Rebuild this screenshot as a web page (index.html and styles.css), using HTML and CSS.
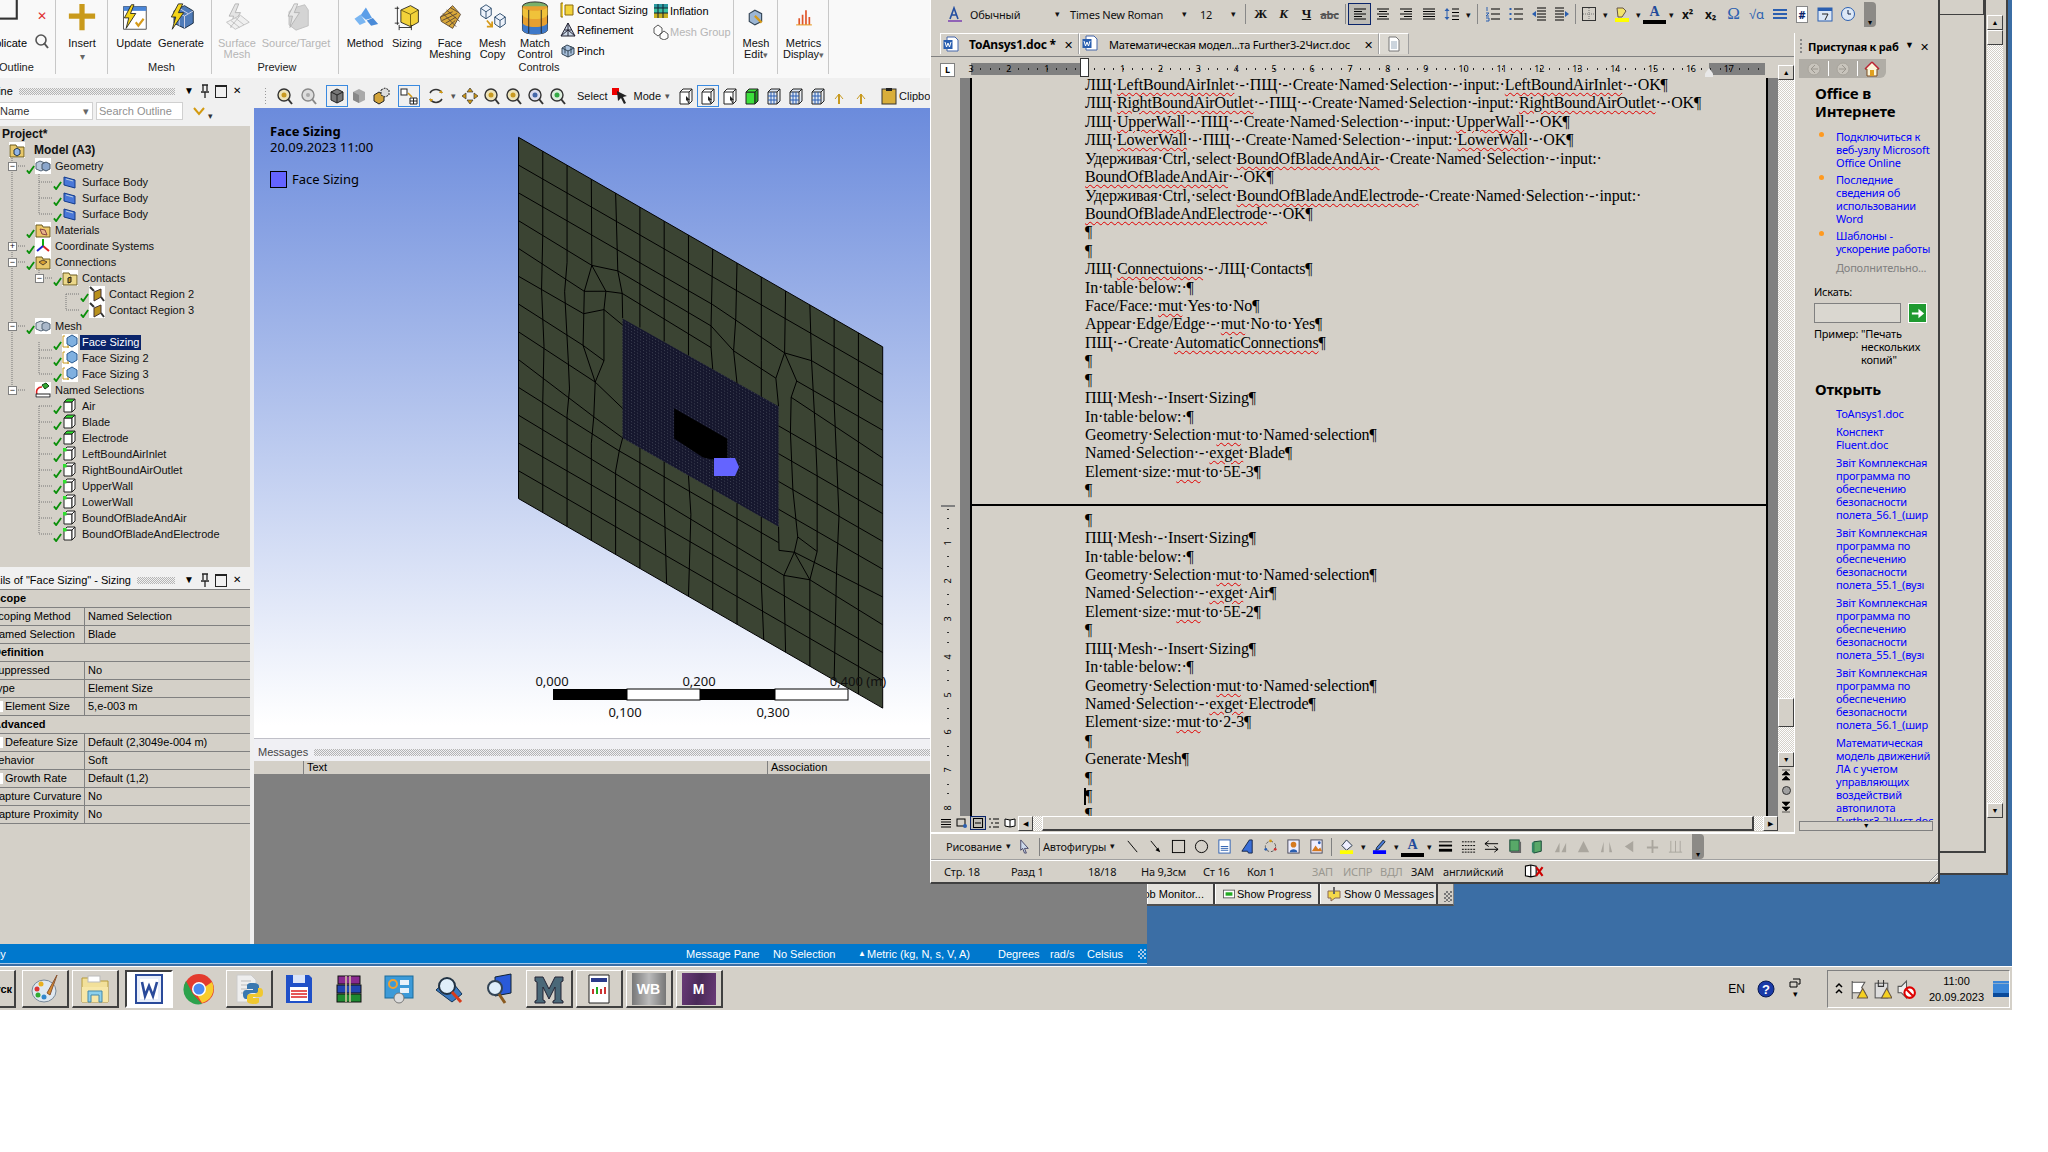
FILE: index.html
```html
<!DOCTYPE html>
<html lang="ru">
<head>
    <meta charset="UTF-8">
    <title>Ansys Mechanical and Word</title>
    <link rel="stylesheet" href="styles.css">
</head>
<body>
<svg class="defs" width="0" height="0">
    <defs>
        <symbol id="check" viewBox="0 0 10 10"><path d="M1 6l2.5 3L9 1" fill="none" stroke="#0a8f0a" stroke-width="2"/></symbol>
        <symbol id="t-model" viewBox="0 0 16 16"><rect width="16" height="16" fill="#fff"/><path d="M1 3h6l1 2h7v10H1z" fill="#e8c86a" stroke="#6a5a20"/><path d="M5 8l3-2 3 2v4l-3 2-3-2z" fill="#8fb4e8" stroke="#234"/></symbol>
        <symbol id="t-geom" viewBox="0 0 16 16"><rect width="16" height="16" fill="#fff"/><path d="M1 5l4-2 5 2v6l-4 2-5-2z" fill="#b8c8dc" stroke="#567"/><path d="M7 6l4-2 4 2v5l-4 2-4-2z" fill="#8aa6cc" stroke="#456"/></symbol>
        <symbol id="t-body" viewBox="0 0 16 16"><path d="M2 3l11 3v8L2 11z" fill="#4a78d8" stroke="#123a8a"/><path d="M4 5l7 2" stroke="#bcd"/></symbol>
        <symbol id="t-mat" viewBox="0 0 16 16"><rect width="16" height="16" fill="#fff"/><path d="M1 3h6l1 2h7v10H1z" fill="#ecc868" stroke="#6a5a20"/><path d="M5 7l5 1 2 5-5-1z" fill="#e8b48a" stroke="#844"/></symbol>
        <symbol id="t-coord" viewBox="0 0 16 16"><rect width="16" height="16" fill="#fff"/><path d="M8 8V1" stroke="#1a1" stroke-width="2"/><path d="M8 8l6 5" stroke="#d22" stroke-width="2"/><path d="M8 8l-6 5" stroke="#22c" stroke-width="2"/></symbol>
        <symbol id="t-conn" viewBox="0 0 16 16"><rect width="16" height="16" fill="#fff"/><path d="M1 3h6l1 2h7v10H1z" fill="#e8c86a" stroke="#6a5a20"/><path d="M4 8l4-2 4 2-4 3z" fill="#d6a030" stroke="#543"/></symbol>
        <symbol id="t-cont" viewBox="0 0 16 16"><rect width="16" height="16" fill="#fff"/><path d="M1 3h6l1 2h7v10H1z" fill="#ecd88a" stroke="#6a5a20"/><path d="M6 8l3-1v5l-3 1z" fill="#b88a18" stroke="#222"/></symbol>
        <symbol id="t-region" viewBox="0 0 16 16"><rect width="16" height="16" fill="#fff"/><path d="M1 1l4 4M12 11l3 4" stroke="#333" stroke-width="2"/><path d="M5 6l7-3v8l-7 4z" fill="#b8901c" stroke="#433"/></symbol>
        <symbol id="t-mesh" viewBox="0 0 16 16"><rect width="16" height="16" fill="#fff"/><path d="M1 5l5-2 5 2v6l-5 2-5-2z" fill="#ccd4de" stroke="#567"/><path d="M7 6l4-2 4 2v5l-4 2-4-2z" fill="#aab8ca" stroke="#567"/></symbol>
        <symbol id="t-size" viewBox="0 0 16 16"><rect width="16" height="16" fill="#fff"/><path d="M1 2v11h6M1 2h2M6 11v3" fill="none" stroke="#c89a20"/><path d="M5 4l5-3 5 3v6l-5 3-5-3z" fill="#7fb0e0" stroke="#2a5a90"/></symbol>
        <symbol id="t-named" viewBox="0 0 16 16"><rect width="16" height="16" fill="#fff"/><path d="M2 12a5 5 0 0 1 5-7" fill="none" stroke="#d22" stroke-width="1.6"/><path d="M7 3l4-2 3 3-4 3z" fill="#3a3" stroke="#141"/><rect x="1" y="12" width="14" height="3" fill="#fff" stroke="#222"/></symbol>
        <symbol id="t-face" viewBox="0 0 16 16"><path d="M2 4h8v10H2z" fill="#fff" stroke="#222"/><path d="M2 4l3-3h8l-3 3z" fill="#2ee02e" stroke="#222"/><path d="M10 4l3-3v10l-3 3z" fill="#fff" stroke="#222"/></symbol>
        <symbol id="t-edge" viewBox="0 0 16 16"><path d="M2 4h8v10H2z" fill="#fff" stroke="#222"/><path d="M2 4l3-3h8l-3 3z" fill="#fff" stroke="#222"/><path d="M10 4l3-3v10l-3 3z" fill="#fff" stroke="#222"/><rect x="1" y="2" width="3.5" height="3.5" fill="#2ee02e"/></symbol>

        <symbol id="b-zoom" viewBox="0 0 18 18"><circle cx="8" cy="8" r="6" fill="#ede3b8" stroke="#333" stroke-width="1.4"/><path d="M12 12l4 5" stroke="#333" stroke-width="2"/><circle cx="8" cy="8" r="2.5" fill="#c89a20"/></symbol>
        <symbol id="b-zoomg" viewBox="0 0 18 18"><circle cx="8" cy="8" r="6" fill="#ddd" stroke="#888" stroke-width="1.4"/><path d="M12 12l4 5" stroke="#888" stroke-width="2"/><circle cx="8" cy="8" r="2" fill="#aaa"/></symbol>
        <symbol id="b-zoomb" viewBox="0 0 18 18"><circle cx="8" cy="8" r="6" fill="#dde" stroke="#333" stroke-width="1.4"/><path d="M12 12l4 5" stroke="#333" stroke-width="2"/><circle cx="8" cy="8" r="2.5" fill="#46a"/></symbol>
        <symbol id="b-zoomv" viewBox="0 0 18 18"><circle cx="8" cy="8" r="6" fill="#ded" stroke="#333" stroke-width="1.4"/><path d="M12 12l4 5" stroke="#333" stroke-width="2"/><circle cx="8" cy="8" r="2.5" fill="#3a4"/></symbol>
        <symbol id="b-cube" viewBox="0 0 18 18"><path d="M3 5l6-3 6 3v8l-6 3-6-3z" fill="#777" stroke="#222"/><path d="M3 5l6 3 6-3M9 8v8" fill="none" stroke="#222"/></symbol>
        <symbol id="b-cubeg" viewBox="0 0 18 18"><path d="M3 5l6-3 6 3v8l-6 3-6-3z" fill="#aaa"/><path d="M3 5l6 3v8l-6-3z" fill="#888"/></symbol>
        <symbol id="b-multi" viewBox="0 0 18 18"><path d="M2 8l5-3 5 3v6l-5 3-5-3z" fill="#d2a33a" stroke="#222"/><path d="M9 3l4-2 4 2v5l-4 2-4-2z" fill="#ddd" stroke="#222" stroke-dasharray="2 1"/></symbol>
        <symbol id="b-split" viewBox="0 0 18 18"><rect x="1" y="2" width="6" height="6" fill="#fff" stroke="#222"/><path d="M10 11h7v6h-7zM13.500 11v6M10 14h7" fill="#fff" stroke="#222"/><path d="M8 6l4 4" stroke="#d39a10" stroke-width="1.6"/></symbol>
        <symbol id="b-rot" viewBox="0 0 18 18"><path d="M3 6a7 7 0 0 1 12 0M15 12a7 7 0 0 1-12 0" fill="none" stroke="#333" stroke-width="1.5"/><path d="M14 3l2 3-4 0zM4 15l-2-3 4 0z" fill="#d39a10"/></symbol>
        <symbol id="b-pan" viewBox="0 0 18 18"><path d="M9 1l3 4H6zM9 17l-3-4h6zM1 9l4-3v6zM17 9l-4 3V6z" fill="#d39a10" stroke="#333" stroke-width=".7"/></symbol>
        <symbol id="b-vert" viewBox="0 0 18 18"><path d="M3 5h9v12H3zM3 5l3-3h9l-3 3M15 2v12l-3 3" fill="#fff" stroke="#222"/><path d="M9 9l4 4-2 0 1 3-1 0-1-3-1 1z" fill="#222"/></symbol>
        <symbol id="b-vface" viewBox="0 0 18 18"><path d="M3 5h9v12H3z" fill="#3de03d" stroke="#222"/><path d="M3 5l3-3h9l-3 3z" fill="#3de03d" stroke="#222"/><path d="M15 2v12l-3 3V5z" fill="#1fa01f" stroke="#222"/></symbol>
        <symbol id="b-vmesh" viewBox="0 0 18 18"><path d="M3 5h9v12H3zM3 5l3-3h9l-3 3M15 2v12l-3 3" fill="#dde6f2" stroke="#222"/><path d="M6 5v12M9 5v12M3 9h9M3 13h9" stroke="#2a5fb4"/></symbol>
        <symbol id="b-clip" viewBox="0 0 18 18"><rect x="2" y="2" width="14" height="15" fill="#d9ae3a" stroke="#333"/><rect x="6" y="1" width="6" height="3" fill="#222"/></symbol>
        <symbol id="b-xyz" viewBox="0 0 18 18"><path d="M8 7v10" stroke="#c89a20" stroke-width="2"/><path d="M4 12l4-5 4 5" fill="none" stroke="#c89a20"/></symbol>
        <symbol id="b-pin" viewBox="0 0 12 14"><path d="M3 1h6M4 1v6M8 1v6M2 8h8M6 8v6" fill="none" stroke="#222" stroke-width="1.300"/></symbol>

        <symbol id="w-left" viewBox="0 0 16 16"><path d="M2 3h12M2 5.500h8M2 8h12M2 10.500h8M2 13h12" stroke="#000"/></symbol>
        <symbol id="w-center" viewBox="0 0 16 16"><path d="M2 3h12M4 5.500h8M2 8h12M4 10.500h8M2 13h12" stroke="#000"/></symbol>
        <symbol id="w-right" viewBox="0 0 16 16"><path d="M2 3h12M6 5.500h8M2 8h12M6 10.500h8M2 13h12" stroke="#000"/></symbol>
        <symbol id="w-just" viewBox="0 0 16 16"><path d="M2 3h12M2 5.500h12M2 8h12M2 10.500h12M2 13h12" stroke="#000"/></symbol>
        <symbol id="w-spacing" viewBox="0 0 16 16"><path d="M3 2l2.500 3h-5zM3 14l2.500-3h-5z" fill="#2b5fb0"/><path d="M3 4v8" stroke="#2b5fb0"/><path d="M8 3h7M8 6.500h7M8 10h7M8 13.500h7" stroke="#000"/></symbol>
        <symbol id="w-num" viewBox="0 0 16 16"><path d="M6 3h9M6 8h9M6 13h9" stroke="#000"/><path d="M2 1v4M1 7h3l-3 3h3M1 12h3v3H1" fill="none" stroke="#2b5fb0"/></symbol>
        <symbol id="w-bul" viewBox="0 0 16 16"><path d="M6 3h9M6 8h9M6 13h9" stroke="#000"/><path d="M1.500 2h2v2h-2zM1.500 7h2v2h-2zM1.500 12h2v2h-2z" fill="#2b5fb0"/></symbol>
        <symbol id="w-out" viewBox="0 0 16 16"><path d="M6 2h9M6 5h9M6 8h9M6 11h9M6 14h9" stroke="#000"/><path d="M1 8l4-3v6z" fill="#2b5fb0"/></symbol>
        <symbol id="w-ind" viewBox="0 0 16 16"><path d="M1 2h9M1 5h9M1 8h9M1 11h9M1 14h9" stroke="#000"/><path d="M15 8l-4-3v6z" fill="#2b5fb0"/></symbol>
        <symbol id="w-border" viewBox="0 0 16 16"><rect x="1.500" y="1.500" width="13" height="13" fill="none" stroke="#333"/><path d="M8 2v12M2 8h12" stroke="#777" stroke-dasharray="1 1"/></symbol>
        <symbol id="w-doc" viewBox="0 0 16 16"><path d="M3 1h7l3 3v11H3z" fill="#fff" stroke="#777"/><path d="M5 6h6M5 8h6M5 10h6M5 12h6" stroke="#9ab"/></symbol>
        <symbol id="w-word" viewBox="0 0 16 16"><path d="M4 1h8l3 3v11H4z" fill="#fff" stroke="#46a"/><rect x="0.500" y="4" width="9" height="9" fill="#2a5fb0"/><path d="M2 6l1.500 5 1.500-4 1.500 4L8 6" fill="none" stroke="#fff"/></symbol>
        <symbol id="w-a3" viewBox="0 0 16 16"><path d="M3 13L7 2l4 11M5 9h4" fill="none" stroke="#234ea0" stroke-width="1.6"/><path d="M1 15h14" stroke="#7a3fb0" stroke-width="1.5"/></symbol>
    </defs>
</svg>

<div class="screen">
    <div class="desktop">

        <!-- windows behind Word -->
        <div class="backwin far">
            <div class="far-scroll">
                <span class="sb-btn">▲</span><span class="sb-btn"></span>
                <span class="sb-fill"></span>
                <span class="sb-btn">▼</span>
            </div>
        </div>
        <div class="backwin near"><div class="near-top"></div></div>

        <!-- Mechanical -->
        <div class="mech">
            <div class="ribbon">
                <div class="rgroup g-outline">
                    <div class="rrow">
                        <div class="dup">
                            <svg class="dup-ic" viewBox="0 0 20 26"><rect x="-6" y="-2" width="24" height="24" fill="none" stroke="#333" stroke-width="2.5"/></svg>
                            <span class="dup-label">Duplicate</span>
                        </div>
                        <div class="dup-side">
                            <span class="red-x">✕</span>
                            <svg class="i16" viewBox="0 0 16 16"><circle cx="7" cy="7" r="5" fill="none" stroke="#555" stroke-width="1.6"/><path d="M10 10l4 5" stroke="#555" stroke-width="2"/></svg>
                        </div>
                    </div>
                    <div class="rlabel out-label">Outline</div>
                </div>
                <div class="rgroup g-insert">
                    <div class="rrow">
                        <div class="rbtn w52">
                            <svg class="ri" viewBox="0 0 32 32"><path d="M13 1h6v11h12v6H19v13h-6V18H1v-6h12z" fill="#c99a1c"/></svg>
                            <span>Insert</span><i class="drop">▾</i>
                        </div>
                    </div>
                </div>
                <div class="rgroup g-mesh">
                    <div class="rrow">
                        <div class="rbtn w44">
                            <svg class="ri" viewBox="0 0 32 32"><path d="M4 4h26v26H4z" fill="#fff" stroke="#444"/><path d="M4 4h26v5H4z" fill="#4a86d8"/><path d="M13 2L5 17h5l-3 12 11-17h-6l4-10z" fill="#f3d41a" stroke="#222"/><path d="M18 22l3 4 6-8" fill="none" stroke="#d69a1a" stroke-width="2.4"/></svg>
                            <span>Update</span>
                        </div>
                        <div class="rbtn w50">
                            <svg class="ri" viewBox="0 0 32 32"><path d="M8 9l12-6 10 6v14l-10 6-12-6z" fill="#4f7bb8" stroke="#123"/><path d="M8 9l12 6 10-6M20 15v14M14 6l10 6M14 12v14" fill="none" stroke="#dde"/><path d="M13 1L5 16h5L6 30l13-19h-6l5-10z" fill="#f3d41a" stroke="#222"/></svg>
                            <span>Generate</span>
                        </div>
                    </div>
                    <div class="rlabel">Mesh</div>
                </div>
                <div class="rgroup g-preview">
                    <div class="rrow">
                        <div class="rbtn w42 off">
                            <svg class="ri" viewBox="0 0 32 32"><path d="M14 1L7 15h5L9 28l11-17h-6l4-10z" fill="#ddd" stroke="#999"/><path d="M4 22l16-8 10 8-16 8z" fill="#eee" stroke="#aaa"/><path d="M9 20l10 8M14 17l10 8M19 15l-10 12" stroke="#aaa"/></svg>
                            <span>Surface<br>Mesh</span>
                        </div>
                        <div class="rbtn w76 off">
                            <svg class="ri" viewBox="0 0 32 32"><path d="M12 6l14-4 4 6v18l-14 5-8-6V10z" fill="#c8c8c8" stroke="#aaa"/><path d="M14 1L7 15h5L9 28l11-17h-6l4-10z" fill="#e2e2e2" stroke="#999"/></svg>
                            <span>Source/Target</span>
                        </div>
                    </div>
                    <div class="rlabel">Preview</div>
                </div>
                <div class="rgroup g-controls">
                    <div class="rrow">
                        <div class="rbtn w40">
                            <svg class="ri" viewBox="0 0 32 32"><path d="M17 5l7 12-7 2-6-5z" fill="#5b9ee8"/><path d="M4 18l7-5 6 9-7 3z" fill="#7ab6f2"/><path d="M18 20l7-3 6 7-8 2z" fill="#4a8bd8"/></svg>
                            <span>Method</span>
                        </div>
                        <div class="rbtn w44">
                            <svg class="ri" viewBox="0 0 32 32"><path d="M9 8l11-5 9 5v14l-9 5-11-5z" fill="#f2d23a" stroke="#222"/><path d="M9 8l11 5 9-5M20 13v14" fill="none" stroke="#6a5a10"/><path d="M5 4v21M2 6h5M2 23h5M7 28h14M7 25v6M21 25v6" fill="none" stroke="#222"/></svg>
                            <span>Sizing</span>
                        </div>
                        <div class="rbtn w42">
                            <svg class="ri" viewBox="0 0 32 32"><path d="M5 16L19 3l9 10-9 16-13-8z" fill="#d9a83a" stroke="#543"/><path d="M8 12l15 15M12 8l15 13M16 5l10 6M5 16l14-6M7 20l17-8M11 23l12-7M15 26l7-6" stroke="#543"/></svg>
                            <span>Face<br>Meshing</span>
                        </div>
                        <div class="rbtn w43">
                            <svg class="ri" viewBox="0 0 32 32"><path d="M2 6l6-4 6 4v8l-6 4-6-4z" fill="#eef3fb" stroke="#246"/><path d="M2 6l6 4 6-4M8 10v8" fill="none" stroke="#246"/><path d="M18 16l6-4 6 4v8l-6 4-6-4z" fill="#eef3fb" stroke="#246"/><path d="M18 16l6 4 6-4M24 20v8" fill="none" stroke="#246"/><path d="M9 20l6 7M15 21v6H9" fill="none" stroke="#d69a1a" stroke-width="2"/></svg>
                            <span>Mesh<br>Copy</span>
                        </div>
                        <div class="rbtn w42">
                            <svg class="ri big" viewBox="0 0 34 38"><ellipse cx="17" cy="6" rx="14" ry="5" fill="#7ab06a" stroke="#222"/><path d="M3 6v26c0 3 6 5 14 5s14-2 14-5V6" fill="#e8a030" stroke="#222"/><path d="M3 6c0 3 6 5 14 5s14-2 14-5v9c0 3-6 5-14 5S3 18 3 15z" fill="#f0c23a"/><path d="M3 24c0 3 6 5 14 5s14-2 14-5v8c0 3-6 5-14 5S3 35 3 32z" fill="#3d78c8"/><path d="M10 10v26M24 10v26" stroke="#222"/></svg>
                            <span>Match<br>Control</span>
                        </div>
                        <div class="rsmall c1">
                            <div class="sitem"><svg class="i16" viewBox="0 0 16 16"><path d="M3 1H1v14h2M5 3h8v10H5z" fill="#f2d23a" stroke="#8a6a10"/></svg><span>Contact Sizing</span></div>
                            <div class="sitem"><svg class="i16" viewBox="0 0 16 16"><path d="M8 1l7 13H1z" fill="#cdd9e8" stroke="#223"/><path d="M8 1v13M4.500 8h7M1 14l7-6 7 6" fill="none" stroke="#223"/></svg><span>Refinement</span></div>
                            <div class="sitem"><svg class="i16" viewBox="0 0 16 16"><path d="M2 5l5-3 7 3v6l-6 3-6-3z" fill="#a8c0dc" stroke="#345"/><path d="M2 5l6 3 6-3M8 8v6M5 3.500v7M11 3.500v7" fill="none" stroke="#345"/></svg><span>Pinch</span></div>
                        </div>
                        <div class="rsmall c2">
                            <div class="sitem"><svg class="i16" viewBox="0 0 16 16"><rect x="1" y="1" width="14" height="4" fill="#2a9aa0"/><rect x="1" y="5" width="14" height="5" fill="#3ac0a0"/><rect x="1" y="10" width="14" height="5" fill="#c8b020"/><path d="M1 5h14M1 10h14M5 1v14M10 1v14" stroke="#123"/></svg><span>Inflation</span></div>
                            <div class="sitem off"><svg class="i16" viewBox="0 0 16 16"><path d="M1 4l4-3 4 3v5l-4 3-4-3zM7 10l4-3 4 3v4l-4 2-4-2z" fill="#fff" stroke="#222"/></svg><span>Mesh Group</span></div>
                        </div>
                    </div>
                    <div class="rlabel">Controls</div>
                </div>
                <div class="rgroup g-edit">
                    <div class="rrow">
                        <div class="rbtn w44">
                            <svg class="ri small" viewBox="0 0 16 16"><path d="M2 5l5-3 6 3v7l-6 3-5-3z" fill="#9cb6d4" stroke="#345"/><path d="M7 7l6 6" stroke="#d69a1a" stroke-width="2"/></svg>
                            <span>Mesh<br>Edit<i class="drop-in">▾</i></span>
                        </div>
                    </div>
                </div>
                <div class="rgroup g-metric">
                    <div class="rrow">
                        <div class="rbtn w51">
                            <svg class="ri small" viewBox="0 0 16 16"><path d="M3 15V9h1.500v6zM6 15V6h1.500v9zM9 15V2h1.500v13zM12 15V8h1.500v7z" fill="#e0552a"/><path d="M1 15h14" stroke="#e8a030"/></svg>
                            <span>Metrics<br>Display<i class="drop-in">▾</i></span>
                        </div>
                    </div>
                </div>
            </div>

            <div class="mech-main">
                <div class="leftcol">
                    <div class="panel-title">
                        <span class="out-name">Outline</span>
                        <span class="grip"></span>
                        <span class="ptool">▼</span><span class="ptool"><svg class="pin-ic"><use href="#b-pin"/></svg></span><span class="ptool box"></span><span class="ptool">✕</span>
                    </div>
                    <div class="search-row">
                        <div class="sel-name">Name<i>▾</i></div>
                        <div class="sel-search">Search Outline</div>
                        <svg class="chev" viewBox="0 0 14 14"><path d="M2 4l5 6 5-6" fill="none" stroke="#d39a10" stroke-width="2"/></svg>
                        <span class="mini">▾</span>
                    </div>
                    <div class="tree">
                        <svg class="tree-lines" viewBox="0 0 250 441">
                            <path d="M12 32V264M12 40h14M12 120h14M12 136h14M12 200h14M12 264h14M39 48v40M39 56h14M39 72h14M39 88h14M39 216v32M39 224h14M39 232h14M39 248h14M39 152h14M66 168v16M66 168h14M66 184h14M39 280v128M39 280h14M39 296h14M39 312h14M39 328h14M39 344h14M39 360h14M39 376h14M39 392h14M39 408h14M39 136v16" fill="none" stroke="#777" stroke-dasharray="1 1"/>
                        </svg>
                        <div class="node root">Project*</div>
                        <div class="node model"><svg class="ti-ic"><use href="#t-model"/></svg><b>Model (A3)</b></div>
                        <div class="node l1"><i class="exp">−</i><svg class="ck"><use href="#check"/></svg><svg class="ti-ic"><use href="#t-geom"/></svg>Geometry</div>
                        <div class="node l2"><svg class="ck"><use href="#check"/></svg><svg class="ti-ic"><use href="#t-body"/></svg>Surface Body</div>
                        <div class="node l2"><svg class="ck"><use href="#check"/></svg><svg class="ti-ic"><use href="#t-body"/></svg>Surface Body</div>
                        <div class="node l2"><svg class="ck"><use href="#check"/></svg><svg class="ti-ic"><use href="#t-body"/></svg>Surface Body</div>
                        <div class="node l1"><svg class="ck"><use href="#check"/></svg><svg class="ti-ic"><use href="#t-mat"/></svg>Materials</div>
                        <div class="node l1"><i class="exp">+</i><svg class="ck"><use href="#check"/></svg><svg class="ti-ic"><use href="#t-coord"/></svg>Coordinate Systems</div>
                        <div class="node l1"><i class="exp">−</i><svg class="ck"><use href="#check"/></svg><svg class="ti-ic"><use href="#t-conn"/></svg>Connections</div>
                        <div class="node l2"><i class="exp in2">−</i><svg class="ck"><use href="#check"/></svg><svg class="ti-ic"><use href="#t-cont"/></svg>Contacts</div>
                        <div class="node l3"><svg class="ck"><use href="#check"/></svg><svg class="ti-ic"><use href="#t-region"/></svg>Contact Region 2</div>
                        <div class="node l3"><svg class="ck"><use href="#check"/></svg><svg class="ti-ic"><use href="#t-region"/></svg>Contact Region 3</div>
                        <div class="node l1"><i class="exp">−</i><svg class="ck"><use href="#check"/></svg><svg class="ti-ic"><use href="#t-mesh"/></svg>Mesh</div>
                        <div class="node l2"><svg class="ck"><use href="#check"/></svg><svg class="ti-ic"><use href="#t-size"/></svg><span class="sel">Face Sizing</span></div>
                        <div class="node l2"><svg class="ck"><use href="#check"/></svg><svg class="ti-ic"><use href="#t-size"/></svg>Face Sizing 2</div>
                        <div class="node l2"><svg class="ck"><use href="#check"/></svg><svg class="ti-ic"><use href="#t-size"/></svg>Face Sizing 3</div>
                        <div class="node l1"><i class="exp">−</i><span class="ck"></span><svg class="ti-ic"><use href="#t-named"/></svg>Named Selections</div>
                        <div class="node l2"><svg class="ck"><use href="#check"/></svg><svg class="ti-ic"><use href="#t-face"/></svg>Air</div>
                        <div class="node l2"><svg class="ck"><use href="#check"/></svg><svg class="ti-ic"><use href="#t-face"/></svg>Blade</div>
                        <div class="node l2"><svg class="ck"><use href="#check"/></svg><svg class="ti-ic"><use href="#t-face"/></svg>Electrode</div>
                        <div class="node l2"><svg class="ck"><use href="#check"/></svg><svg class="ti-ic"><use href="#t-edge"/></svg>LeftBoundAirInlet</div>
                        <div class="node l2"><svg class="ck"><use href="#check"/></svg><svg class="ti-ic"><use href="#t-edge"/></svg>RightBoundAirOutlet</div>
                        <div class="node l2"><svg class="ck"><use href="#check"/></svg><svg class="ti-ic"><use href="#t-edge"/></svg>UpperWall</div>
                        <div class="node l2"><svg class="ck"><use href="#check"/></svg><svg class="ti-ic"><use href="#t-edge"/></svg>LowerWall</div>
                        <div class="node l2"><svg class="ck"><use href="#check"/></svg><svg class="ti-ic"><use href="#t-edge"/></svg>BoundOfBladeAndAir</div>
                        <div class="node l2"><svg class="ck"><use href="#check"/></svg><svg class="ti-ic"><use href="#t-edge"/></svg>BoundOfBladeAndElectrode</div>
                    </div>
                    <div class="panel-title details-title">
                        <span class="det-name">Details of "Face Sizing" - Sizing</span>
                        <span class="grip"></span>
                        <span class="ptool">▼</span><span class="ptool"><svg class="pin-ic"><use href="#b-pin"/></svg></span><span class="ptool box"></span><span class="ptool">✕</span>
                    </div>
                    <div class="details">
                        <div class="cat">Scope</div>
                        <div class="prop"><span>Scoping Method</span><span>Named Selection</span></div>
                        <div class="prop"><span>Named Selection</span><span>Blade</span></div>
                        <div class="cat">Definition</div>
                        <div class="prop"><span>Suppressed</span><span>No</span></div>
                        <div class="prop"><span>Type</span><span>Element Size</span></div>
                        <div class="prop chk"><span><i></i>Element Size</span><span>5,e-003 m</span></div>
                        <div class="cat">Advanced</div>
                        <div class="prop chk"><span><i></i>Defeature Size</span><span>Default (2,3049e-004 m)</span></div>
                        <div class="prop"><span>Behavior</span><span>Soft</span></div>
                        <div class="prop chk"><span><i></i>Growth Rate</span><span>Default (1,2)</span></div>
                        <div class="prop"><span>Capture Curvature</span><span>No</span></div>
                        <div class="prop"><span>Capture Proximity</span><span>No</span></div>
                    </div>
                </div>

                <div class="rightcol">
                    <div class="gfx-bar">
                        <span class="handle"></span>
                        <span class="gi"><svg><use href="#b-zoom"/></svg></span>
                        <span class="gi gl2"><svg><use href="#b-zoomg"/></svg></span>
                        <span class="gi on gl6"><svg><use href="#b-cube"/></svg></span>
                        <span class="gi"><svg><use href="#b-cubeg"/></svg></span>
                        <span class="gi"><svg><use href="#b-multi"/></svg></span>
                        <span class="gi on gl6"><svg><use href="#b-split"/></svg></span>
                        <span class="gi gl5"><svg><use href="#b-rot"/></svg></span>
                        <span class="gdrop">▾</span>
                        <span class="gi"><svg><use href="#b-pan"/></svg></span>
                        <span class="gi"><svg><use href="#b-zoom"/></svg></span>
                        <span class="gi"><svg><use href="#b-zoom"/></svg></span>
                        <span class="gi"><svg><use href="#b-zoomb"/></svg></span>
                        <span class="gi"><svg><use href="#b-zoomv"/></svg></span>
                        <span class="gtext sel-txt">Select</span>
                        <span class="gi narrow"><svg viewBox="0 0 18 18"><rect x="1" y="1" width="7" height="7" fill="#e00"/><path d="M6 4l10 5-4 1 3 6-2 1-3-6-3 3z" fill="#222"/></svg></span>
                        <span class="gtext mode-txt">Mode</span>
                        <span class="gdrop">▾</span>
                        <span class="gi gl2"><svg><use href="#b-vert"/></svg></span>
                        <span class="gi on"><svg><use href="#b-vert"/></svg></span>
                        <span class="gi"><svg><use href="#b-vert"/></svg></span>
                        <span class="gi"><svg><use href="#b-vface"/></svg></span>
                        <span class="gi"><svg><use href="#b-vmesh"/></svg></span>
                        <span class="gi"><svg><use href="#b-vmesh"/></svg></span>
                        <span class="gi"><svg><use href="#b-vmesh"/></svg></span>
                        <span class="gi"><svg><use href="#b-xyz"/></svg></span>
                        <span class="gi"><svg><use href="#b-xyz"/></svg></span>
                        <span class="gi gl8 narrow"><svg><use href="#b-clip"/></svg></span>
                        <span class="gtext">Clipboard</span>
                    </div>

                    <div class="viewport">
                        <svg class="scene" viewBox="254 108 676 630">
                            <defs>
                                <pattern id="fine" width="3" height="3" patternUnits="userSpaceOnUse" patternTransform="matrix(1 .575 0 1 0 0)">
                                    <rect width="3" height="3" fill="#14152c"/>
                                    <rect x="1" y="1" width="1.100" height="1.100" fill="#484c5c"/>
                                </pattern>
                            </defs>
                            <g transform="matrix(24.28 13.97 0 27.79 518.5 137.3)">
                                <polygon class="plate" points="0,0 15,0 15,13 0,13"/>
                            </g>
                            <polygon class="fine" points="622.500,318.600 778.600,406.200 778.600,526.800 622.500,437.900"/>
                            <g class="mesh" transform="matrix(24.28 13.97 0 27.79 518.5 137.3)">
                                <polygon class="core" points="6.41,6.53 8.6,6.52 8.6,7.38 7.6,7.7 6.41,7.62"/>
                                <polyline points="1,0 1,3 .95,5 1.05,7 1,9 1,13"/>
                                <polyline points="2,0 2,3.5 1.9,4.6 2.05,7 2.1,8 2,9 2,13"/>
                                <polyline points="3,0 3.02,3.09 2.71,4.18 2.66,6.15 3.16,7.22 3.1,8.5 3,9.5 3,13"/>
                                <polyline points="4,0 4.09,2.75 4.27,3.47 4.29,4.35"/>
                                <polyline points="4.29,8.66 4.15,9.2 4,10 4,13"/>
                                <polyline points="3.02,3.09 3.6,3.73 3.52,4.43 3.52,6.27 3.16,7.22"/>
                                <polyline points="3.6,3.73 4.27,3.47"/>
                                <polyline points="2.66,6.15 3.52,6.27"/>
                                <polyline points="5,0 5,4.33"/><polyline points="6,0 6,4.33"/><polyline points="7,0 7,4.33"/>
                                <polyline points="8,0 7.93,2.8 7.93,3.58 8,4.33"/>
                                <polyline points="9,0 8.95,2 8.86,3.23 9,4.33"/>
                                <polyline points="10,0 10,3 10,4.31"/>
                                <polyline points="11,0 10.96,2.25 10.6,3.34 10.71,4.29"/>
                                <polyline points="10.96,2.25 11.46,3.01 11.23,3.71 11.2,5 11.3,7 11.5,8.6 11.36,9.22 10.93,10.27 11,13"/>
                                <polyline points="12,0 12.07,1.97 12.2,4 12.3,6 12.3,8.72 12,9.89 12,13"/>
                                <polyline points="13,0 13,3 13.1,5 13.2,7 13.1,9 13,13"/>
                                <polyline points="14,0 14,4 14,9 14,13"/>
                                <polyline points="5,8.66 5,10 5,13"/><polyline points="6,8.65 6,10 6.1,13"/><polyline points="7,8.65 7.1,10 7,13"/><polyline points="8,8.65 8,11 8,13"/><polyline points="9,8.64 9,11 9,13"/><polyline points="10,8.63 10,11 10.1,13"/>
                                <polyline points="10.71,8.63 10.73,9.47 11.36,9.22"/>
                                <polyline points="11.5,8.6 12.3,8.72"/>
                                <polyline points="11.36,9.22 12,9.89 10.93,10.27"/>
                                <polyline points="0,1 15,1"/>
                                <polyline points="0,2 8,2 10.96,2.25 12.07,1.97 15,2"/>
                                <polyline points="0,3 3.02,3.09 4.09,2.75 7.93,2.8 8.86,3.23 10.6,3.34"/>
                                <polyline points="11.46,3.01 15,3"/>
                                <polyline points="0,4 2.71,4.18 3.6,3.73"/>
                                <polyline points="4.27,3.47 7.93,3.58"/>
                                <polyline points="11.23,3.71 15,4"/>
                                <polyline points="0,5 2.68,5 3.52,4.43 4.29,4.6"/><polyline points="0,6 2.66,6.15"/><polyline points="0,7 3.16,7.22 4.29,7.6"/><polyline points="0,8 3.1,8.5 4.29,8.66"/>
                                <polyline points="10.71,5 15,5"/><polyline points="10.71,6 15,6"/><polyline points="10.71,7 15,7"/><polyline points="10.71,8 15,8"/>
                                <polyline points="0,9 4.15,9.2 10.71,9.2"/><polyline points="11.36,9.22 15,9"/>
                                <polyline points="0,10 10.93,10.27"/><polyline points="12,9.89 15,10"/>
                                <polyline points="0,11 15,11"/><polyline points="0,12 15,12"/>
                                <polygon class="edge" points="0,0 15,0 15,13 0,13"/>
                            </g>
                            <polygon class="hex" points="714,458 735,458 739,467 735,476 714,476"/>
                            <rect class="sb-b" x="553" y="689" width="74" height="11"/>
                            <rect class="sb-w" x="627" y="689" width="73" height="11"/>
                            <rect class="sb-b" x="700" y="689" width="75" height="11"/>
                            <rect class="sb-w" x="775" y="689" width="73" height="11"/>
                            <text class="sb-t" x="552" y="686">0,000</text>
                            <text class="sb-t" x="699" y="686">0,200</text>
                            <text class="sb-t" x="858" y="686">0,400 (m)</text>
                            <text class="sb-t" x="625" y="717">0,100</text>
                            <text class="sb-t" x="773" y="717">0,300</text>
                        </svg>
                        <div class="legend-title">Face Sizing</div>
                        <div class="legend-date">20.09.2023 11:00</div>
                        <div class="legend-item"><span class="swatch"></span>Face Sizing</div>
                    </div>

                    <div class="messages">
                        <div class="msg-title"><span>Messages</span><span class="grip"></span></div>
                        <div class="msg-head"><span class="mh1"></span><span class="mh2">Text</span><span class="mh3">Association</span></div>
                    </div>
                    <div class="msg-empty"></div>
                </div>
            </div>

            <div class="mech-status">
                <span class="st-ready">Ready</span>
                <span class="st-a">Message Pane</span>
                <span class="st-b">No Selection</span>
                <span class="st-c">▲</span>
                <span class="st-d">Metric (kg, N, s, V, A)</span>
                <span class="st-e">Degrees</span>
                <span class="st-f">rad/s</span>
                <span class="st-g">Celsius</span>
                <span class="st-h"></span>
            </div>
        </div>

        <!-- floating Workbench strip under Word -->
        <div class="wb-strip">
            <span class="wb-btn b1">Job Monitor...</span>
            <span class="wb-btn b2"><svg class="i12" viewBox="0 0 14 10"><rect x=".5" y=".5" width="13" height="9" fill="#fff" stroke="#555"/><rect x="3" y="3" width="8" height="4" fill="#2a2"/></svg>Show Progress</span>
            <span class="wb-btn b3"><svg class="i16" viewBox="0 0 16 16"><path d="M2 5h12v7H9l-4 3v-3H2z" fill="#f4d84a" stroke="#865"/><rect x="7" y="1" width="2" height="7" fill="#666"/></svg>Show 0 Messages</span>
            <span class="wb-grip"></span>
        </div>

        <!-- Word -->
        <div class="word">
            <div class="w-toolbar">
                <span class="w-handle"></span>
                <span class="wi sty"><svg><use href="#w-a3"/></svg></span>
                <span class="wbox b-style">Обычный<i>▾</i></span>
                <span class="wbox b-font">Times New Roman<i>▾</i></span>
                <span class="wbox b-size">12<i>▾</i></span>
                <span class="wsep s8"></span>
                <span class="wi bold">Ж</span><span class="wi ital">К</span><span class="wi und">Ч</span><span class="wi strike">abc</span>
                <span class="wsep s7"></span>
                <span class="wi on"><svg><use href="#w-left"/></svg></span>
                <span class="wi"><svg><use href="#w-center"/></svg></span>
                <span class="wi"><svg><use href="#w-right"/></svg></span>
                <span class="wi"><svg><use href="#w-just"/></svg></span>
                <span class="wi"><svg><use href="#w-spacing"/></svg></span><span class="war">▾</span>
                <span class="wsep s8"></span>
                <span class="wi"><svg><use href="#w-num"/></svg></span>
                <span class="wi"><svg><use href="#w-bul"/></svg></span>
                <span class="wi"><svg><use href="#w-out"/></svg></span>
                <span class="wi"><svg><use href="#w-ind"/></svg></span>
                <span class="wsep s4"></span>
                <span class="wi"><svg><use href="#w-border"/></svg></span><span class="war">▾</span>
                <span class="wi"><svg viewBox="0 0 16 16"><path d="M3 2h6l3 3-4 6H4z" fill="#f2e36a" stroke="#654"/><rect x="1" y="12" width="14" height="4" fill="#ff0"/></svg></span><span class="war">▾</span>
                <span class="wi colorA">A</span><span class="war">▾</span>
                <span class="wi sup">x²</span><span class="wi sup">x₂</span>
                <span class="wi omega">Ω</span>
                <span class="wi rootal">√α</span>
                <span class="wi"><svg viewBox="0 0 16 16"><path d="M1 4h14M1 8h14M1 12h14" stroke="#2b5fb0" stroke-width="2"/></svg></span>
                <span class="wi hash">#</span>
                <span class="wi"><svg viewBox="0 0 16 16"><rect x="1" y="2" width="14" height="13" fill="#dde8f6" stroke="#2b5fb0"/><path d="M1 2h14v3H1z" fill="#2b5fb0"/><path d="M5 8h6l-3 6" fill="none" stroke="#222"/></svg></span>
                <span class="wi"><svg viewBox="0 0 16 16"><circle cx="8" cy="8" r="6.500" fill="#dde8f6" stroke="#2b5fb0"/><path d="M8 4v4h3" fill="none" stroke="#124"/></svg></span>
                <span class="w-over">▾</span>
            </div>

            <div class="w-body">
                <div class="w-docarea">
                    <div class="w-tabs">
                        <span class="tab t1"><svg class="i16"><use href="#w-word"/></svg><b>ToAnsys1.doc *</b><i>✕</i></span>
                        <span class="tab t2"><svg class="i16"><use href="#w-word"/></svg><span>Математическая модел...та Further3-2Чист.doc</span><i>✕</i></span>
                        <span class="tab t3"><svg class="i16"><use href="#w-doc"/></svg></span>
                    </div>
                    <div class="w-split">
                        <div class="w-main">
                            <div class="ruler-row">
                                <span class="corner">L</span>
                                <div class="ruler">
                                    <div class="ruler-nums">
                                        <span>3</span><span>2</span><span>1</span><span></span><span>1</span><span>2</span><span>3</span><span>4</span><span>5</span><span>6</span><span>7</span><span>8</span><span>9</span><span>10</span><span>11</span><span>12</span><span>13</span><span>14</span><span>15</span><span>16</span><span>17</span><span></span>
                                    </div>
                                    <span class="ind-left"></span>
                                    <span class="ind-right"></span>
                                </div>
                            </div>
                            <div class="doc-row">
                                <div class="vruler">
                                    <span>1</span><span>2</span><span>3</span><span>4</span><span>5</span><span>6</span><span>7</span><span>8</span>
                                </div>
                                <div class="vstrip"></div>
                                <div class="doc">
                                    <div class="ln">ЛЩ·<u>LeftBoundAirInlet</u>·-·ПЩ·-·Create·Named·Selection·-·input:·<u>LeftBoundAirInlet</u>·-·OK¶</div>
                                    <div class="ln">ЛЩ·<u>RightBoundAirOutlet</u>·-·ПЩ·-·Create·Named·Selection·-input:·<u>RightBoundAirOutlet</u>·-·OK¶</div>
                                    <div class="ln">ЛЩ·<u>UpperWall</u>·-·ПЩ·-·Create·Named·Selection·-·input:·<u>UpperWall</u>·-·OK¶</div>
                                    <div class="ln">ЛЩ·<u>LowerWall</u>·-·ПЩ·-·Create·Named·Selection·-·input:·<u>LowerWall</u>·-·OK¶</div>
                                    <div class="ln">Удерживая·Ctrl,·select·<u>BoundOfBladeAndAir</u>-·Create·Named·Selection·-·input:·</div>
                                    <div class="ln"><u>BoundOfBladeAndAir</u>·-·OK¶</div>
                                    <div class="ln">Удерживая·Ctrl,·select·<u>BoundOfBladeAndElectrode</u>-·Create·Named·Selection·-·input:·</div>
                                    <div class="ln"><u>BoundOfBladeAndElectrode</u>·-·OK¶</div>
                                    <div class="ln">¶</div>
                                    <div class="ln">¶</div>
                                    <div class="ln">ЛЩ·<u>Connectuions</u>·-·ЛЩ·Contacts¶</div>
                                    <div class="ln">In·table·below:·¶</div>
                                    <div class="ln">Face/Face:·<u>mut</u>·Yes·to·No¶</div>
                                    <div class="ln">Appear·Edge/Edge·-·<u>mut</u>·No·to·Yes¶</div>
                                    <div class="ln">ПЩ·-·Create·<u>AutomaticConnections</u>¶</div>
                                    <div class="ln">¶</div>
                                    <div class="ln">¶</div>
                                    <div class="ln">ПЩ·Mesh·-·Insert·Sizing¶</div>
                                    <div class="ln">In·table·below:·¶</div>
                                    <div class="ln">Geometry·Selection·<u>mut</u>·to·Named·selection¶</div>
                                    <div class="ln">Named·Selection·-·<u>exget</u>·Blade¶</div>
                                    <div class="ln">Element·size:·<u>mut</u>·to·5E-3¶</div>
                                    <div class="ln">¶</div>
                                    <div class="page-break"></div>
                                    <div class="ln">¶</div>
                                    <div class="ln">ПЩ·Mesh·-·Insert·Sizing¶</div>
                                    <div class="ln">In·table·below:·¶</div>
                                    <div class="ln">Geometry·Selection·<u>mut</u>·to·Named·selection¶</div>
                                    <div class="ln">Named·Selection·-·<u>exget</u>·Air¶</div>
                                    <div class="ln">Element·size:·<u>mut</u>·to·5E-2¶</div>
                                    <div class="ln">¶</div>
                                    <div class="ln">ПЩ·Mesh·-·Insert·Sizing¶</div>
                                    <div class="ln">In·table·below:·¶</div>
                                    <div class="ln">Geometry·Selection·<u>mut</u>·to·Named·selection¶</div>
                                    <div class="ln">Named·Selection·-·<u>exget</u>·Electrode¶</div>
                                    <div class="ln">Element·size:·<u>mut</u>·to·2-3¶</div>
                                    <div class="ln">¶</div>
                                    <div class="ln">Generate·Mesh¶</div>
                                    <div class="ln">¶</div>
                                    <div class="ln caret">¶</div>
                                    <div class="ln">¶</div>
                                </div>
                                <div class="vmargin"></div>
                            </div>
                        </div>
                        <div class="vscroll">
                            <span class="sb-btn">▲</span>
                            <span class="sb-fill f1"></span>
                            <span class="sb-btn thumb"></span>
                            <span class="sb-fill f2"></span>
                            <span class="sb-btn">▼</span>
                            <svg class="nav-ic" viewBox="0 0 16 16"><path d="M4 3h8M8 4l4 4H4zM8 9l4 4H4z" fill="#000" stroke="#000" stroke-width=".6"/></svg>
                            <span class="nav-dot"></span>
                            <svg class="nav-ic" viewBox="0 0 16 16"><path d="M4 13h8M8 12L4 8h8zM8 7L4 3h8z" fill="#000" stroke="#000" stroke-width=".6"/></svg>
                        </div>
                    </div>
                    <div class="hscroll">
                        <span class="view"><svg class="i12" viewBox="0 0 12 12"><path d="M1 2.500h10M1 5h10M1 7.500h10M1 10h10" stroke="#000"/></svg></span>
                        <span class="view"><svg class="i12" viewBox="0 0 12 12"><rect x="1" y="2" width="8" height="7" fill="none" stroke="#000"/><circle cx="9" cy="9" r="2" fill="#2b5fb0"/></svg></span>
                        <span class="view act"><svg class="i12" viewBox="0 0 12 12"><rect x="1.500" y="1.500" width="9" height="9" fill="none" stroke="#000"/><path d="M3 6h6" stroke="#000"/></svg></span>
                        <span class="view"><svg class="i12" viewBox="0 0 12 12"><path d="M1 2h2M5 2h6M3 6h2M7 6h4M1 10h2M5 10h6" stroke="#000"/></svg></span>
                        <span class="view"><svg class="i12" viewBox="0 0 12 12"><path d="M1 2l5 1 5-1v7l-5 1-5-1zM6 3v7" fill="#fff" stroke="#000"/></svg></span>
                        <span class="sb-btn side">◀</span>
                        <span class="sb-fill thin"></span>
                        <span class="h-track"></span>
                        <span class="sb-fill thin"></span>
                        <span class="sb-btn side">▶</span>
                    </div>
                </div>

                <div class="w-pane">
                    <div class="pane-head">
                        <span class="pane-handle"></span>
                        <span class="pane-title">Приступая к раб</span><span class="pane-arrow">▼</span><span class="pane-close">✕</span>
                    </div>
                    <div class="pane-nav">
                        <svg viewBox="0 0 16 16"><circle cx="8" cy="8" r="6" fill="#c8c4bc" stroke="#a8a49c"/><path d="M9 4L5 8l4 4M5 8h7" fill="none" stroke="#9a968e"/></svg>
                        <i></i>
                        <svg viewBox="0 0 16 16"><circle cx="8" cy="8" r="6" fill="#c8c4bc" stroke="#a8a49c"/><path d="M7 4l4 4-4 4M11 8H4" fill="none" stroke="#9a968e"/></svg>
                        <i></i>
                        <svg viewBox="0 0 16 16"><path d="M8 1L1 8h2v7h10V8h2z" fill="#fbf6da" stroke="#7a4a20"/><rect x="6" y="9" width="4" height="6" fill="#e0a020"/><path d="M8 1L1 8" stroke="#b23" stroke-width="1.5"/><path d="M8 1l7 7" stroke="#b23" stroke-width="1.5"/></svg>
                    </div>
                    <div class="pane-body">
                        <h2>Office в<br>Интернете</h2>
                        <ul>
                            <li>Подключиться к<br>веб-узлу Microsoft<br>Office Online</li>
                            <li>Последние<br>сведения об<br>использовании<br>Word</li>
                            <li>Шаблоны -<br>ускорение работы</li>
                        </ul>
                        <div class="more">Дополнительно...</div>
                        <div class="find">Искать:</div>
                        <div class="find-row"><span class="find-in"></span><span class="find-go"><svg viewBox="0 0 16 16"><path d="M2 7h7V3l6 5-6 5V9H2z" fill="#fff"/></svg></span></div>
                        <div class="example"><span>Пример:</span><span>"Печать<br>нескольких<br>копий"</span></div>
                        <h2 class="open">Открыть</h2>
                        <div class="links">
                            <a>ToAnsys1.doc</a>
                            <a>Конспект<br>Fluent.doc</a>
                            <a>Звіт Комплексная<br>программа по<br>обеспечению<br>безопасности<br>полета_56.1_(шир</a>
                            <a>Звіт Комплексная<br>программа по<br>обеспечению<br>безопасности<br>полета_55.1_(вузı</a>
                            <a>Звіт Комплексная<br>программа по<br>обеспечению<br>безопасности<br>полета_55.1_(вузı</a>
                            <a>Звіт Комплексная<br>программа по<br>обеспечению<br>безопасности<br>полета_56.1_(шир</a>
                            <a>Математическая<br>модель движений<br>ЛА с учетом<br>управляющих<br>воздействий<br>автопилота<br>Further3-2Чист.doc</a>
                        </div>
                    </div>
                    <div class="pane-more">▼</div>
                </div>
            </div>

            <div class="w-draw">
                <span class="w-handle short"></span>
                <span class="dtext d1">Рисование<i>▾</i></span>
                <span class="di"><svg viewBox="0 0 16 16"><path d="M4 1l8 9-4 0 2 5-2 0-2-5-2 2z" fill="#cdd9ec" stroke="#446"/></svg></span>
                <span class="dsep"></span>
                <span class="dtext d2">Автофигуры<i>▾</i></span>
                <span class="di"><svg viewBox="0 0 16 16"><path d="M3 2l10 12" stroke="#000"/></svg></span>
                <span class="di"><svg viewBox="0 0 16 16"><path d="M3 2l9 11" stroke="#000"/><path d="M13 14l-5-2 3-3z" fill="#000"/></svg></span>
                <span class="di"><svg viewBox="0 0 16 16"><rect x="1.500" y="1.500" width="13" height="13" fill="none" stroke="#000"/></svg></span>
                <span class="di"><svg viewBox="0 0 16 16"><circle cx="8" cy="8" r="6.500" fill="none" stroke="#000"/></svg></span>
                <span class="di"><svg viewBox="0 0 16 16"><rect x="2" y="1" width="12" height="14" fill="#fff" stroke="#2b5fb0"/><path d="M4 8h8M4 10h8M4 12h8" stroke="#2b5fb0"/></svg></span>
                <span class="di"><svg viewBox="0 0 16 16"><path d="M10 1L2 13h6l1 2h4V1z" fill="#3a6fd8" stroke="#124"/></svg></span>
                <span class="di"><svg viewBox="0 0 16 16"><circle cx="8" cy="8" r="5.500" fill="none" stroke="#555" stroke-dasharray="3 2"/><circle cx="8" cy="2" r="1.500" fill="#d39a10"/><circle cx="3" cy="11" r="1.500" fill="#2b5fb0"/><circle cx="13" cy="11" r="1.500" fill="#c33"/></svg></span>
                <span class="di"><svg viewBox="0 0 16 16"><rect x="2" y="1" width="12" height="14" fill="#eef" stroke="#445"/><circle cx="8" cy="6" r="3" fill="#d67a20"/><path d="M4 14c0-4 8-4 8 0" fill="#2b5fb0"/></svg></span>
                <span class="di"><svg viewBox="0 0 16 16"><rect x="2" y="1" width="12" height="14" fill="#eef" stroke="#445"/><path d="M3 13l4-6 3 4 2-2 2 4" fill="#d67a20"/><circle cx="11" cy="4" r="1.500" fill="#2b5fb0"/></svg></span>
                <span class="dsep"></span>
                <span class="di"><svg viewBox="0 0 16 16"><path d="M8 1l6 6-6 5-5-5z" fill="#eef" stroke="#234"/><rect x="1" y="12" width="14" height="4" fill="#ff0"/></svg></span><span class="dar">▾</span>
                <span class="di"><svg viewBox="0 0 16 16"><path d="M12 1l2 2-7 8-3 1 1-3z" fill="#4a7ad8" stroke="#123"/><rect x="1" y="12" width="14" height="4" fill="#00f"/></svg></span><span class="dar">▾</span>
                <span class="di colorA">A</span><span class="dar">▾</span>
                <span class="di"><svg viewBox="0 0 16 16"><path d="M1 3h14" stroke="#000"/><path d="M1 7h14" stroke="#000" stroke-width="2"/><path d="M1 12h14" stroke="#000" stroke-width="3"/></svg></span>
                <span class="di"><svg viewBox="0 0 16 16"><path d="M1 3h14M1 7h14M1 11h14M1 14h14" stroke="#000" stroke-dasharray="2 1"/></svg></span>
                <span class="di"><svg viewBox="0 0 16 16"><path d="M1 5h14M1 11h14" stroke="#000"/><path d="M5 2L1 5l4 3M11 8l4 3-4 3" fill="none" stroke="#000"/></svg></span>
                <span class="di"><svg viewBox="0 0 16 16"><rect x="3" y="1" width="10" height="12" fill="#58a868" stroke="#143"/><path d="M4 14h10v-11" fill="none" stroke="#666" stroke-width="2"/></svg></span>
                <span class="di"><svg viewBox="0 0 16 16"><path d="M4 3l8-1v11l-8 2z" fill="#58a868" stroke="#143"/><path d="M4 3l-2 1v10l2 1z" fill="#386"/></svg></span>
                <span class="di"><svg viewBox="0 0 16 16"><path d="M2 14l5-10v10zM9 14l5-10v10z" fill="#aaa69e"/></svg></span>
                <span class="di"><svg viewBox="0 0 16 16"><path d="M8 2l6 12H2z" fill="#aaa69e"/></svg></span>
                <span class="di"><svg viewBox="0 0 16 16"><path d="M5 14V3l-3 11zM11 14V3l3 11z" fill="#aaa69e"/></svg></span>
                <span class="di"><svg viewBox="0 0 16 16"><path d="M12 2v12L3 8z" fill="#aaa69e"/></svg></span>
                <span class="di"><svg viewBox="0 0 16 16"><path d="M8 1v14M2 9h12" stroke="#aaa69e" stroke-width="2"/></svg></span>
                <span class="di"><svg viewBox="0 0 16 16"><path d="M3 2v12M8 2v12M13 2v12M1 14h14" stroke="#aaa69e"/></svg></span>
                <span class="w-over">▾</span>
            </div>

            <div class="w-status">
                <span class="s-a">Стр. 18</span>
                <span class="s-b">Разд 1</span>
                <span class="s-c">18/18</span>
                <span class="s-d">На 9,3см</span>
                <span class="s-e">Ст 16</span>
                <span class="s-f">Кол 1</span>
                <span class="s-g">ЗАП</span>
                <span class="s-h">ИСПР</span>
                <span class="s-i">ВДЛ</span>
                <span class="s-j">ЗАМ</span>
                <span class="s-k">английский</span>
                <svg class="s-l" viewBox="0 0 18 14"><path d="M1 2l5-1 5 1v9l-5 1-5-1zM6 1v11" fill="#fff" stroke="#000"/><path d="M11 3l6 8M17 3l-6 8" stroke="#c00" stroke-width="2"/></svg>
                <span class="s-grip"></span>
            </div>
        </div>
    </div>

    <div class="taskbar">
        <span class="start">Пуск</span>
        <span class="cell raised"><svg viewBox="0 0 32 32"><ellipse cx="15" cy="18" rx="12" ry="11" fill="#dfe8f0" stroke="#789"/><circle cx="8" cy="16" r="2.500" fill="#d33"/><circle cx="12" cy="11" r="2.500" fill="#e9b020"/><circle cx="9" cy="22" r="2.500" fill="#3a3"/><circle cx="15" cy="24" r="2.500" fill="#38c"/><path d="M28 2L18 20l3 2z" fill="#d88a2a" stroke="#853"/></svg></span>
        <span class="cell raised"><svg viewBox="0 0 32 32"><path d="M3 5h11l2 3h13v21H3z" fill="#f2e09a" stroke="#b59a3a"/><rect x="9" y="3" width="12" height="6" fill="#fff" stroke="#bbb"/><path d="M3 14h26v15H3z" fill="#f7e7a8"/><path d="M9 29V18h14v11h-3v-7h-8v7z" fill="#8cd0ec" stroke="#48a"/></svg></span>
        <span class="cell pressed"><svg viewBox="0 0 32 32"><rect x="3" y="2" width="26" height="28" fill="#e8eefa" stroke="#2a4a9a" stroke-width="2"/><rect x="7" y="6" width="18" height="20" fill="#fff"/><path d="M9 9l3 14 4-10 4 10 4-14" fill="none" stroke="#2a4a9a" stroke-width="2.600"/></svg></span>
        <span class="cell"><svg viewBox="0 0 32 32"><circle cx="16" cy="16" r="15" fill="#e33b2e"/><path d="M29 9a15 15 0 0 1-10 21l-6-10z" fill="#f8cc2c"/><path d="M19 31A15 15 0 0 1 3 8l7 13z" fill="#2ca24c"/><circle cx="16" cy="16" r="7" fill="#fff"/><circle cx="16" cy="16" r="5.500" fill="#4a8af0"/></svg></span>
        <span class="cell raised"><svg viewBox="0 0 32 32"><path d="M4 2h14l5 5v22H4z" fill="#eee" stroke="#ccc"/><path d="M8 8h10M8 12h10M8 16h6M8 20h6" stroke="#bbb"/><path d="M19 10c-5 0-5 2-5 3v3h6v1h-7c-3 0-3 3-3 5s1 4 3 4h2v-3c0-2 2-3 4-3h4c2 0 3-1 3-3v-4c0-2-3-3-7-3z" fill="#3a78b0"/><path d="M21 31c5 0 5-2 5-3v-3h-6v-1h7c3 0 3-3 3-5s-1-4-3-4h-2v3c0 2-2 3-4 3h-4c-2 0-3 1-3 3v4c0 2 3 3 7 3z" fill="#f0c830"/></svg></span>
        <span class="cell"><svg viewBox="0 0 32 32"><path d="M3 2h23l3 3v25H3z" fill="#1f50c8"/><rect x="10" y="2" width="12" height="8" fill="#dbe4f8"/><rect x="7" y="14" width="18" height="14" fill="#fff"/><path d="M8 18h16M8 21h16M8 24h16" stroke="#d22" stroke-width="1.500"/></svg></span>
        <span class="cell"><svg viewBox="0 0 32 32"><rect x="5" y="3" width="22" height="8" fill="#8a2a90" stroke="#111"/><rect x="4" y="12" width="24" height="8" fill="#2244b0" stroke="#111"/><rect x="4" y="21" width="24" height="8" fill="#1e8a30" stroke="#111"/><path d="M13 3v26M17 3v26" stroke="#d8c8a0" stroke-width="1.500"/></svg></span>
        <span class="cell"><svg viewBox="0 0 32 32"><rect x="2" y="3" width="28" height="22" fill="#3c9ad8" stroke="#1a6a9a"/><circle cx="10" cy="11" r="4" fill="none" stroke="#f0a030" stroke-width="2"/><rect x="17" y="7" width="9" height="5" fill="#e8f2fa"/><rect x="17" y="15" width="9" height="5" fill="#e8f2fa"/><circle cx="16" cy="25" r="5" fill="#ddd" stroke="#777"/></svg></span>
        <span class="cell"><svg viewBox="0 0 32 32"><path d="M3 17L16 5l13 16-10 8z" fill="#3a78c0" stroke="#135"/><circle cx="14" cy="13" r="8" fill="#dfeefa" stroke="#234" stroke-width="2"/><path d="M19 19l9 10" stroke="#d83a1a" stroke-width="3"/></svg></span>
        <span class="cell"><svg viewBox="0 0 32 32"><path d="M12 4l16-3v19l-16 3z" fill="#2a5ad8" stroke="#123"/><circle cx="12" cy="15" r="7" fill="#dfeefa" stroke="#345" stroke-width="2"/><path d="M16 21l6 9" stroke="#8a5a20" stroke-width="3"/></svg></span>
        <span class="cell raised"><svg viewBox="0 0 32 32"><path d="M2 4h8l6 12 6-12h8v4l-2 1v18l2 1v2h-10v-2l2-1V14l-6 12-6-12v13l2 1v2H2v-2l2-1V9L2 8z" fill="#4a6878" stroke="#223"/></svg></span>
        <span class="cell raised"><svg viewBox="0 0 32 32"><path d="M6 2h20v28H6z" fill="#fff" stroke="#222"/><path d="M8 5h16v4H8z" fill="#2a3a8a"/><path d="M10 16v5M14 14v7M18 16v5M22 14v7" stroke="#c33" stroke-width="2"/><path d="M14 14v7" stroke="#2a2" stroke-width="2"/></svg></span>
        <span class="cell raised wb"><span>WB</span></span>
        <span class="cell raised mp"><span>M</span></span>

        <div class="tray-left">
            <span class="lang">EN</span>
            <svg class="help" viewBox="0 0 18 18"><circle cx="9" cy="9" r="8" fill="#1a3aa8" stroke="#0a1a50"/><text x="9" y="13.500" text-anchor="middle" class="help-t">?</text></svg>
            <span class="min-btn"><svg viewBox="0 0 12 10"><path d="M4 1h7v5H9M1 4h7v5H1z" fill="none" stroke="#000"/></svg><i>▾</i></span>
        </div>
        <div class="tray">
            <svg class="t-up" viewBox="0 0 10 16"><path d="M2 6l3-3 3 3M2 12l3-3 3 3" fill="none" stroke="#000" stroke-width="1.500"/></svg>
            <svg class="tr-ic" viewBox="0 0 18 20"><path d="M3 2v17M3 3h12l-3 5 3 5H3" fill="#fff" stroke="#555"/><path d="M13 9l5 9H8z" fill="#f5d020" stroke="#654"/></svg>
            <svg class="tr-ic" viewBox="0 0 18 20"><rect x="2" y="4" width="12" height="14" fill="#ddd" stroke="#555"/><path d="M5 1v6h5V1" fill="none" stroke="#333"/><path d="M13 9l5 9H8z" fill="#f5d020" stroke="#654"/></svg>
            <svg class="tr-ic" viewBox="0 0 18 20"><path d="M1 7h3l5-5v16l-5-5H1z" fill="#eee" stroke="#555"/><circle cx="12" cy="13" r="5" fill="#fff" stroke="#d00" stroke-width="2"/><path d="M9 10l6 6" stroke="#d00" stroke-width="2"/></svg>
            <span class="clock">11:00<br>20.09.2023</span>
            <svg class="tr-desk" viewBox="0 0 16 16"><rect width="16" height="16" fill="#3a86d8"/><path d="M0 12h16v4H0z" fill="#0a4a9a"/><rect y="2" width="16" height="1" fill="#8ac"/></svg>
        </div>
    </div>
</div>
</body>
</html>
```
FILE: styles.css
```css
* {
    box-sizing: border-box;
}

body {
    margin: 0;
    width: 2048px;
    height: 1152px;
    overflow: hidden;
    background: #ffffff;
    font-family: "Liberation Sans", Arial, sans-serif;
    font-size: 11px;
    color: #000000;
}

i {
    font-style: normal;
}

svg {
    display: block;
    flex: none;
}

.defs {
    position: absolute;
}

.screen {
    width: 2012px;
    height: 1010px;
    display: flex;
    flex-direction: column;
}

.desktop {
    position: relative;
    flex: 1;
    background: #3b6ea5;
    overflow: hidden;
}

.i16 {
    width: 16px;
    height: 16px;
}

.i12 {
    width: 12px;
    height: 12px;
}

/* Windows behind Word */
.backwin {
    position: absolute;
    top: 0;
    background: #d4d0c8;
    border-right: 2px solid #404040;
    border-bottom: 2px solid #404040;
}

.far {
    left: 1900px;
    width: 108px;
    height: 875px;
    display: flex;
    justify-content: flex-end;
    padding-right: 2px;
}

.far-scroll {
    width: 17px;
    height: 818px;
    padding-top: 15px;
    display: flex;
    flex-direction: column;
}

.near {
    left: 1900px;
    width: 86px;
    height: 853px;
}

.near-top {
    height: 15px;
    border-bottom: 1px solid #404040;
    border-right: 1px solid #404040;
}

.sb-btn {
    flex: none;
    height: 15px;
    width: 16px;
    display: flex;
    align-items: center;
    justify-content: center;
    font-size: 7px;
    line-height: 1;
    background: #d4d0c8;
    border: 1px solid;
    border-color: #ffffff #404040 #404040 #ffffff;
}

.sb-fill {
    flex: 1;
    width: 16px;
    background: repeating-conic-gradient(#ffffff 0 25%, #d4d0c8 0 50%) 0 0 / 2px 2px;
}

/* Mechanical window */
.mech {
    position: absolute;
    left: 0;
    top: 0;
    width: 1147px;
    height: 964px;
    display: flex;
    flex-direction: column;
    background: #f0f0f0;
}

.ribbon {
    height: 78px;
    flex: none;
    display: flex;
    background: #f9f9f9;
}

.rgroup {
    flex: none;
    height: 74px;
    display: flex;
    flex-direction: column;
    border-right: 1px solid #c8c8c8;
}

.g-outline { width: 56px; }
.g-insert { width: 52px; }
.g-mesh { width: 104px; padding-left: 4px; }
.g-preview { width: 127px; padding-left: 4px; }
.g-controls { width: 395px; padding-left: 6px; }
.g-edit { width: 44px; }
.g-metric { width: 51px; }

.rrow {
    height: 61px;
    display: flex;
}

.rlabel {
    height: 13px;
    line-height: 13px;
    text-align: center;
    color: #222222;
}

.out-label {
    text-align: left;
    margin-left: -1px;
    width: 34px;
}

.rbtn {
    position: relative;
    flex: none;
    display: flex;
    flex-direction: column;
    align-items: center;
    text-align: center;
    line-height: 11px;
    color: #111111;
}

.rbtn .ri {
    width: 28px;
    height: 28px;
    margin: 3px 0 7px;
}

.rbtn .ri.big {
    width: 32px;
    height: 34px;
    margin: 1px 0 3px;
}

.rbtn .ri.small {
    width: 18px;
    height: 18px;
    margin: 8px 0 12px;
}

.w40 { width: 40px; }
.w42 { width: 42px; }
.w43 { width: 43px; }
.w44 { width: 44px; }
.w50 { width: 50px; }
.w51 { width: 51px; }
.w52 { width: 52px; }
.w76 { width: 76px; }

.off {
    color: #a0a0a0;
    opacity: .75;
}

.drop {
    font-size: 10px;
    color: #666666;
    line-height: 16px;
}

.drop-in {
    font-size: 9px;
    color: #666666;
}

.dup {
    width: 30px;
    position: relative;
}

.dup-ic {
    width: 20px;
    height: 22px;
}

.dup-label {
    position: absolute;
    right: 3px;
    top: 38px;
    line-height: 11px;
}

.dup-side {
    width: 24px;
    display: flex;
    flex-direction: column;
    align-items: center;
    padding-top: 9px;
    gap: 10px;
}

.red-x {
    color: #e03030;
    font-size: 12px;
    line-height: 14px;
}

.rsmall {
    flex: none;
    display: flex;
    flex-direction: column;
}

.c1 { width: 93px; margin-left: 4px; }
.c2 { width: 81px; }

.sitem {
    height: 21px;
    display: flex;
    align-items: center;
    gap: 1px;
    white-space: nowrap;
}

/* Outline and details */
.mech-main {
    flex: 1;
    min-height: 0;
    display: flex;
}

.leftcol {
    width: 254px;
    flex: none;
    padding-right: 4px;
    display: flex;
    flex-direction: column;
}

.panel-title {
    height: 14px;
    margin-top: 6px;
    padding-right: 5px;
    display: flex;
    align-items: center;
    white-space: nowrap;
}

.out-name { margin-left: -22px; }
.det-name { margin-left: -23px; }

.grip {
    flex: 1;
    height: 7px;
    margin: 0 6px;
    background: repeating-conic-gradient(#b4b4b4 0 25%, transparent 0 50%) 0 0 / 2px 2px;
}

.ptool {
    width: 16px;
    display: flex;
    align-items: center;
    justify-content: center;
    font-size: 10px;
    line-height: 12px;
}

.pin-ic {
    width: 12px;
    height: 14px;
}

.ptool.box::before {
    content: "";
    display: inline-block;
    width: 10px;
    height: 10px;
    border: 1px solid #222222;
    border-top-width: 2px;
}

.search-row {
    height: 18px;
    margin-top: 4px;
    display: flex;
    align-items: center;
    color: #333333;
}

.sel-name {
    width: 93px;
    height: 18px;
    line-height: 17px;
    background: #ffffff;
    border: 1px solid #d0d0d0;
    border-left: 0;
    display: flex;
    justify-content: space-between;
    padding-right: 3px;
}

.sel-name i {
    color: #666666;
}

.sel-search {
    width: 87px;
    height: 18px;
    margin-left: 3px;
    padding-left: 2px;
    line-height: 17px;
    background: #ffffff;
    border: 1px solid #d0d0d0;
    color: #909090;
}

.chev {
    width: 14px;
    height: 14px;
    margin-left: 9px;
}

.mini {
    font-size: 9px;
    margin-left: 2px;
    margin-top: 10px;
}

.tree {
    position: relative;
    height: 441px;
    margin-top: 6px;
    background: #d4d0c8;
    color: #111111;
}

.tree-lines {
    position: absolute;
    left: 0;
    top: 0;
    width: 250px;
    height: 441px;
}

.node {
    position: relative;
    height: 16px;
    display: flex;
    align-items: center;
    white-space: nowrap;
}

.root {
    font-weight: 700;
    font-size: 12px;
    padding-left: 2px;
}

.model {
    padding-left: 9px;
    gap: 5px;
    font-size: 12px;
}

.l1 { padding-left: 26px; }
.l2 { padding-left: 53px; }
.l3 { padding-left: 80px; }

.ck {
    width: 9px;
    height: 9px;
    margin-top: 6px;
    flex: none;
}

.ti-ic {
    width: 16px;
    height: 16px;
    margin-right: 4px;
}

.exp {
    position: absolute;
    left: 8px;
    top: 4px;
    width: 9px;
    height: 9px;
    background: #ffffff;
    border: 1px solid #808080;
    font-size: 9px;
    line-height: 6px;
    text-align: center;
}

.exp.in2 { left: 35px; }

.sel {
    background: #0a246a;
    color: #ffffff;
    padding: 0 2px;
    margin-left: -2px;
    line-height: 14px;
    height: 15px;
}

.details-title {
    margin-top: 5px;
    height: 16px;
}

.details {
    flex: 1;
    margin-top: 1px;
    background: #d4d0c8;
    overflow: hidden;
}

.cat {
    height: 18px;
    line-height: 17px;
    text-indent: -7px;
    font-weight: 700;
    border-top: 1px solid #808080;
}

.prop {
    height: 18px;
    display: flex;
    border-top: 1px solid #808080;
    line-height: 16px;
}

.prop span:first-child {
    width: 85px;
    flex: none;
    text-indent: -9px;
    white-space: nowrap;
    border-right: 1px solid #808080;
}

.prop span:last-child {
    padding-left: 3px;
    white-space: nowrap;
}

.prop.chk span:first-child {
    text-indent: 0;
    padding-left: 5px;
    position: relative;
}

.prop.chk i {
    position: absolute;
    left: -5px;
    top: 3px;
    width: 8px;
    height: 11px;
    background: #ffffff;
}

.details::after {
    content: "";
    display: block;
    border-top: 1px solid #808080;
}

/* Graphics */
.rightcol {
    width: 893px;
    flex: none;
    display: flex;
    flex-direction: column;
}

.gfx-bar {
    height: 30px;
    padding-top: 6px;
    display: flex;
    align-items: center;
    white-space: nowrap;
    color: #111111;
    overflow: hidden;
}

.handle {
    width: 20px;
    height: 18px;
    flex: none;
    background: radial-gradient(circle, #999999 .7px, transparent 1px) 10px 0 / 3px 3px repeat-y;
}

.gi {
    width: 22px;
    height: 22px;
    flex: none;
    display: flex;
    align-items: center;
    justify-content: center;
    border: 1px solid transparent;
}

.gi svg {
    width: 18px;
    height: 18px;
}

.gi.on {
    border-color: #3a8ae0;
}

.gi.narrow { width: 16px; margin-right: 2px; }
.gl2 { margin-left: 2px; }
.gl5 { margin-left: 5px; }
.gl6 { margin-left: 6px; }
.gl8 { margin-left: 8px; }

.gdrop {
    width: 12px;
    flex: none;
    text-align: center;
    font-size: 9px;
    color: #555555;
}

.gtext { flex: none; }
.sel-txt { margin: 0 4px 0 8px; }
.mode-txt { margin-left: 4px; }

.viewport {
    position: relative;
    height: 630px;
    flex: none;
    background: linear-gradient(#6b8bdc, #ffffff 98%);
}

.scene {
    position: absolute;
    left: 0;
    top: 0;
    width: 676px;
    height: 630px;
}

.mesh polyline {
    fill: none;
    stroke: #000000;
    stroke-width: 1;
    vector-effect: non-scaling-stroke;
}

.plate { fill: #3b4433; }
.fine { fill: url(#fine); }
.core { fill: #000000; }

.edge {
    fill: none;
    stroke: #000000;
    stroke-width: 1;
    vector-effect: non-scaling-stroke;
}

.hex { fill: #6464ff; }
.sb-b { fill: #000000; }
.sb-w { fill: #ffffff; stroke: #000000; }

.sb-t {
    font-family: "Noto Sans", sans-serif;
    font-size: 13px;
    text-anchor: middle;
    fill: #111111;
}

.legend-title {
    padding: 16px 0 0 16px;
    font-family: "Noto Sans", sans-serif;
    font-weight: 700;
    font-size: 13px;
    line-height: 15px;
    position: relative;
}

.legend-date {
    padding-left: 16px;
    font-family: "Noto Sans", sans-serif;
    font-size: 13px;
    line-height: 16px;
    position: relative;
}

.legend-item {
    position: relative;
    margin: 15px 0 0 16px;
    display: flex;
    align-items: center;
    gap: 5px;
    font-family: "Noto Sans", sans-serif;
    font-size: 13px;
}

.swatch {
    width: 17px;
    height: 17px;
    background: #6464ff;
    border: 1px solid #000000;
}

.messages {
    height: 37px;
    flex: none;
    background: #f0f0f4;
    border-top: 1px solid #c0c0c8;
}

.msg-title {
    height: 22px;
    display: flex;
    align-items: center;
    padding: 4px 0 0 4px;
    color: #444444;
}

.msg-head {
    height: 14px;
    display: flex;
    background: #d4d0c8;
    line-height: 13px;
    border-bottom: 1px solid #808080;
}

.mh1 { width: 50px; border-right: 1px solid #808080; }
.mh2 { width: 464px; padding-left: 3px; border-right: 1px solid #808080; }
.mh3 { padding-left: 3px; }

.msg-empty {
    flex: 1;
    background: #808080;
}

.mech-status {
    height: 20px;
    flex: none;
    display: flex;
    align-items: center;
    background: #0078cd;
    color: #ffffff;
    white-space: nowrap;
    border-bottom: 1px solid #a8c8e8;
}

.st-ready { margin-left: -26px; width: 712px; }
.st-a { width: 87px; }
.st-b { width: 85px; }
.st-c { width: 9px; font-size: 8px; }
.st-d { width: 131px; }
.st-e { width: 52px; }
.st-f { width: 37px; }
.st-g { width: 51px; }

.st-h {
    width: 8px;
    height: 10px;
    background: repeating-conic-gradient(#a8c8e8 0 25%, transparent 0 50%) 0 0 / 4px 4px;
}

/* Workbench strip */
.wb-strip {
    position: absolute;
    left: 1147px;
    top: 883px;
    width: 307px;
    height: 23px;
    display: flex;
    background: #d4d0c8;
    border-bottom: 2px solid #505050;
    border-right: 1px solid #808080;
    overflow: hidden;
    white-space: nowrap;
}

.wb-btn {
    height: 21px;
    display: flex;
    align-items: center;
    gap: 2px;
    border-right: 2px solid #404040;
    background: #e4e2dc;
    box-shadow: inset 1px 0 #ffffff;
}

.b1 { width: 68px; justify-content: flex-end; padding-right: 9px; }
.b2 { width: 105px; padding-left: 8px; }
.b3 { width: 118px; padding-left: 6px; }

.wb-grip {
    width: 8px;
    height: 11px;
    margin: 8px 0 0 6px;
    background: repeating-conic-gradient(#777777 0 25%, transparent 0 50%) 0 0 / 4px 4px;
}

/* Word window */
.word {
    position: absolute;
    left: 930px;
    top: 0;
    width: 1010px;
    height: 884px;
    display: flex;
    flex-direction: column;
    background: #d4d0c8;
    border-right: 2px solid #404040;
    border-bottom: 2px solid #404040;
    border-left: 1px solid #ffffff;
    font-family: "Noto Sans", sans-serif;
    letter-spacing: -.2px;
}

.w-toolbar {
    height: 33px;
    flex: none;
    display: flex;
    align-items: center;
    padding-bottom: 5px;
    white-space: nowrap;
    color: #111111;
}

.w-handle {
    width: 15px;
    height: 18px;
    flex: none;
}

.wi {
    width: 23px;
    height: 22px;
    flex: none;
    display: flex;
    align-items: center;
    justify-content: center;
    font-size: 13px;
}

.wi svg {
    width: 16px;
    height: 16px;
}

.wi.sty { width: 18px; }

.wi.on {
    background: #bebcb6;
    border: 1px solid #0a246a;
}

.wbox {
    flex: none;
    display: flex;
    justify-content: space-between;
}

.wbox i {
    font-size: 9px;
    color: #111111;
}

.b-style { width: 100px; padding: 0 4px 0 6px; }
.b-font { width: 127px; padding: 0 4px 0 6px; }
.b-size { width: 50px; padding: 0 5px 0 9px; }

.wsep { flex: none; height: 20px; position: relative; }
.wsep::after {
    content: "";
    position: absolute;
    left: 50%;
    top: 0;
    height: 100%;
    border-left: 1px solid #888888;
}

.s8 { width: 8px; }
.s7 { width: 7px; }
.s4 { width: 4px; }

.bold { font-weight: 700; font-family: "Liberation Serif", serif; }
.ital { font-style: italic; font-weight: 700; font-family: "Liberation Serif", serif; }
.und { text-decoration: underline; font-weight: 700; font-family: "Liberation Serif", serif; }
.strike { text-decoration: line-through; font-size: 11px; font-weight: 700; color: #555555; }
.sup { font-weight: 700; font-size: 12px; }
.omega { font-size: 17px; color: #2b5fb0; font-family: "Liberation Serif", serif; }
.rootal { color: #2b5fb0; }

.wi.hash {
    width: 12px;
    height: 17px;
    margin: 0 5px;
    font-size: 11px;
    font-weight: 700;
    color: #0a246a;
    background: #ffffff;
    border: 1px solid #888888;
}

.colorA {
    font-family: "Liberation Serif", serif;
    font-size: 14px;
    font-weight: 700;
    color: #224a9a;
    border-bottom: 4px solid #000000;
    height: 20px;
    line-height: 14px;
}

.war {
    width: 10px;
    flex: none;
    text-align: center;
    font-size: 9px;
}

.dar {
    width: 10px;
    flex: none;
    text-align: center;
    font-size: 9px;
}

.w-over {
    width: 12px;
    height: 25px;
    margin-left: 5px;
    flex: none;
    background: #8c8a86;
    border-radius: 0 4px 4px 0;
    font-size: 8px;
    color: #000000;
    text-align: center;
    display: flex;
    align-items: flex-end;
    justify-content: center;
}

.w-body {
    flex: 1;
    min-height: 0;
    display: flex;
}

.w-docarea {
    width: 864px;
    flex: none;
    display: flex;
    flex-direction: column;
    border-right: 1px solid #ffffff;
}

.w-tabs {
    height: 24px;
    flex: none;
    padding-left: 9px;
    display: flex;
    border-bottom: 1px solid #808080;
}

.w-split {
    flex: 1;
    min-height: 0;
    display: flex;
}

.w-main {
    width: 847px;
    flex: none;
    display: flex;
    flex-direction: column;
}

.tab {
    height: 21px;
    display: flex;
    align-items: center;
    white-space: nowrap;
    gap: 4px;
    padding-left: 4px;
    background: #dcd9d2;
    border: 1px solid #a0a0a0;
    border-bottom: 0;
    border-left-color: #ffffff;
    border-top-color: #ffffff;
}

.tab i { position: absolute; }

.t1 { width: 139px; position: relative; padding-left: 2px; gap: 10px; background: #d4d0c8; font-size: 12px; }
.t1 i { left: 123px; font-size: 11px; }
.t2 { width: 300px; position: relative; padding-left: 11px; gap: 15px; font-size: 11px; background: #d4d0c8; }
.t2 svg { position: absolute; left: 2px; top: 1px; }
.t2 span { margin-left: 18px; }
.t2 i { left: 284px; }
.t3 { width: 30px; padding-left: 6px; }

.ruler-row {
    height: 21px;
    flex: none;
    padding: 6px 0 0 9px;
    display: flex;
}

.corner {
    width: 15px;
    height: 14px;
    background: #ffffff;
    border: 1px solid #808080;
    font-size: 9px;
    line-height: 12px;
    font-weight: 700;
    text-align: center;
    flex: none;
}

.ruler {
    position: relative;
    width: 794px;
    height: 12px;
    margin-left: 16px;
    font-size: 9px;
    line-height: 12px;
    background:
        repeating-linear-gradient(90deg, #222222 0 1px, transparent 1px 9.48px) 0 5px / 100% 2px no-repeat,
        linear-gradient(90deg, #808080 0 109px, transparent 109px 738px, #808080 738px) 0 0 / 100% 100% no-repeat;
}

.ruler-nums {
    display: flex;
    margin-left: -19px;
}

.ruler-nums span {
    width: 37.9px;
    flex: none;
    text-align: center;
}

.ind-left {
    position: absolute;
    left: 109px;
    top: -5px;
    width: 9px;
    height: 19px;
    background: #ffffff;
    border: 1px solid #333333;
}

.ind-right {
    position: absolute;
    left: 734px;
    top: 5px;
    width: 8px;
    height: 9px;
    background: #e8e8e8;
    clip-path: polygon(50% 0, 100% 60%, 100% 100%, 0 100%, 0 60%);
}

.doc-row {
    flex: 1;
    min-height: 0;
    display: flex;
    overflow: hidden;
    padding-left: 10px;
}

.vruler {
    width: 14px;
    flex: none;
    margin-right: 5px;
    padding-top: 446px;
    font-size: 9px;
    display: flex;
    flex-direction: column;
    background:
        linear-gradient(#808080, #808080) 0 427px / 14px 2px no-repeat,
        repeating-linear-gradient(#333333 0 1px, transparent 1px 9.48px) 6px 431px / 2px 100% no-repeat;
}

.vruler span {
    height: 37.9px;
    flex: none;
    display: flex;
    align-items: center;
    justify-content: center;
    transform: rotate(-90deg);
    background: #d4d0c8;
    background-clip: content-box;
    padding: 13px 0;
}

.vstrip {
    width: 12px;
    flex: none;
    background: #808080;
    border-right: 2px solid #000000;
}

.doc {
    width: 794px;
    flex: none;
    padding: 0 0 0 113px;
    margin-top: -2px;
    font-family: "Liberation Serif", serif;
    font-size: 16px;
    letter-spacing: -.15px;
    white-space: nowrap;
}

.ln {
    height: 18.43px;
    line-height: 18.43px;
}

.ln u {
    text-decoration: underline wavy #e00000 1px;
    text-underline-offset: 2px;
}

.page-break {
    position: relative;
    top: -6px;
    width: 794px;
    height: 12px;
    margin: 0 0 -1px -113px;
    border-bottom: 2px solid #000000;
}

.caret {
    position: relative;
}

.caret::before {
    content: "";
    position: absolute;
    left: -1px;
    top: 1px;
    width: 2px;
    height: 17px;
    background: #000000;
}

.vmargin {
    width: 12px;
    flex: none;
    background: #808080;
    border-left: 2px solid #000000;
}

.vscroll {
    width: 16px;
    flex: none;
    padding-top: 8px;
    display: flex;
    flex-direction: column;
    align-items: center;
}

.sb-fill.f1 { flex: none; height: 618px; }
.sb-btn.thumb { height: 29px; }
.sb-fill.f2 { flex: none; height: 25px; }

.nav-ic {
    width: 16px;
    height: 16px;
}

.nav-dot {
    width: 9px;
    height: 9px;
    margin: 3px 0 4px;
    border-radius: 50%;
    background: #a0a0a0;
    border: 1px solid #333333;
}

.hscroll {
    height: 18px;
    flex: none;
    padding: 0 16px 2px 7px;
    display: flex;
    align-items: center;
    border-bottom: 2px solid #ffffff;
}

.view {
    width: 16px;
    height: 14px;
    flex: none;
    display: flex;
    align-items: center;
    justify-content: center;
}

.view.act {
    background: #bebcb6;
    border: 1px solid #0a246a;
}

.sb-btn.side { width: 15px; height: 15px; }
.sb-fill.thin { flex: none; width: 9px; height: 15px; }

.h-track {
    flex: 1;
    height: 15px;
    border-top: 1px solid #ffffff;
    border-bottom: 2px solid #404040;
    border-right: 2px solid #404040;
    border-left: 1px solid #ffffff;
}

/* Task pane */
.w-pane {
    flex: 1;
    min-width: 0;
    display: flex;
    flex-direction: column;
}

.pane-head {
    height: 26px;
    flex: none;
    display: flex;
    align-items: center;
    padding-left: 5px;
    white-space: nowrap;
}

.pane-handle {
    width: 2px;
    height: 14px;
    margin-right: 6px;
    border-left: 2px dotted #888888;
}

.pane-title {
    width: 97px;
    overflow: hidden;
    font-weight: 700;
}

.pane-arrow { font-size: 9px; width: 12px; margin-top: -3px; }
.pane-close { margin-left: 3px; font-size: 11px; }

.pane-nav {
    width: 87px;
    height: 19px;
    margin-left: 4px;
    flex: none;
    display: flex;
    align-items: center;
    background: #b0ada6;
    border-radius: 0 0 6px 0;
    padding-left: 7px;
    gap: 6px;
}

.pane-nav svg {
    width: 16px;
    height: 16px;
}

.pane-nav i {
    width: 1px;
    height: 15px;
    background: #ffffff;
}

.pane-body {
    flex: 1;
    min-height: 0;
    overflow: hidden;
    padding: 6px 0 0 20px;
    line-height: 13px;
    white-space: nowrap;
}

.pane-body h2 {
    margin: 0;
    font-size: 15px;
    line-height: 18px;
    font-weight: 700;
}

.pane-body ul {
    list-style: none;
    margin: 10px 0 0;
    padding: 0 0 0 21px;
    color: #0000ff;
}

.pane-body li {
    position: relative;
    margin-bottom: 4px;
}

.pane-body li::before {
    content: "";
    position: absolute;
    left: -17px;
    top: 2px;
    width: 5px;
    height: 5px;
    border-radius: 50%;
    background: #ff9a20;
}

.more {
    margin: 6px 0 0 21px;
    color: #808080;
}

.find {
    margin-top: 11px;
    margin-left: -1px;
    line-height: 13px;
}

.find-row {
    display: flex;
    gap: 7px;
    margin: 5px 0 0 -1px;
}

.find-in {
    width: 87px;
    height: 20px;
    border: 1px solid #808080;
    background: #dad7d0;
}

.find-go {
    width: 19px;
    height: 20px;
    background: #1f9a30;
    border: 1px solid #ffffff;
    display: flex;
    align-items: center;
    justify-content: center;
}

.find-go svg {
    width: 15px;
    height: 15px;
}

.example {
    display: flex;
    margin: 4px 0 0 -1px;
}

.example span:first-child { width: 47px; }

.pane-body h2.open {
    margin-top: 14px;
}

.links {
    margin-top: 9px;
    padding-left: 21px;
    color: #0000ff;
}

.links a {
    display: block;
    margin-bottom: 5px;
}

.pane-more {
    height: 10px;
    flex: none;
    margin: 0 5px 3px 4px;
    border: 1px solid #808080;
    font-size: 7px;
    line-height: 8px;
    text-align: center;
}

/* Word bottom bars */
.w-draw {
    height: 26px;
    flex: none;
    display: flex;
    align-items: center;
    white-space: nowrap;
    color: #111111;
    border-bottom: 1px solid #a0a0a0;
}

.w-handle.short { width: 15px; }

.dtext { flex: none; display: flex; gap: 4px; }
.dtext i { font-size: 9px; }
.d1 { width: 67px; }
.d2 { width: 78px; }

.di {
    width: 23px;
    height: 20px;
    flex: none;
    display: flex;
    align-items: center;
    justify-content: center;
}

.di svg {
    width: 15px;
    height: 15px;
}

.dsep {
    width: 7px;
    height: 18px;
    flex: none;
    position: relative;
}

.dsep::after {
    content: "";
    position: absolute;
    left: 3px;
    top: 0;
    height: 100%;
    border-left: 1px solid #808080;
}

.w-status {
    position: relative;
    height: 22px;
    flex: none;
    display: flex;
    align-items: center;
    padding-left: 13px;
    white-space: nowrap;
    color: #111111;
    border-top: 1px solid #ffffff;
}

.s-a { width: 67px; }
.s-b { width: 77px; }
.s-c { width: 53px; }
.s-d { width: 62px; }
.s-e { width: 44px; }
.s-f { width: 65px; }
.s-g { width: 31px; color: #9a9890; }
.s-h { width: 37px; color: #9a9890; }
.s-i { width: 31px; color: #9a9890; }
.s-j { width: 32px; }
.s-k { width: 81px; }

.s-l {
    width: 20px;
    height: 15px;
}

.s-grip {
    position: absolute;
    right: 0;
    bottom: 0;
    width: 12px;
    height: 12px;
    background: repeating-linear-gradient(135deg, transparent 0 2px, #808080 2px 3px, #ffffff 3px 4px);
    clip-path: polygon(100% 0, 100% 100%, 0 100%);
}

/* Taskbar */
.taskbar {
    height: 44px;
    flex: none;
    display: flex;
    align-items: center;
    background: #d4d0c8;
    border-top: 1px solid #ffffff;
    padding-top: 1px;
}

.start {
    width: 20px;
    height: 38px;
    flex: none;
    margin: 0 4px 0 -4px;
    display: flex;
    align-items: center;
    justify-content: flex-end;
    padding-right: 2px;
    overflow: hidden;
    font-weight: 700;
    border: 1px solid;
    border-color: #ffffff #404040 #404040 #d4d0c8;
    border-right-width: 2px;
    border-bottom-width: 2px;
}

.cell {
    width: 50px;
    height: 38px;
    flex: none;
    display: flex;
    align-items: center;
    justify-content: center;
}

.cell > svg {
    width: 32px;
    height: 32px;
}

.cell.raised {
    width: 47px;
    margin: 0 1.500px;
    border: 1px solid;
    border-color: #ffffff #404040 #404040 #ffffff;
    border-right-width: 2px;
    border-bottom-width: 2px;
}

.cell.pressed {
    width: 48px;
    margin: 0 1px 0 5px;
    background: #ffffff;
    border: 2px solid;
    border-color: #404040 #ffffff #ffffff #404040;
}

.wb span {
    width: 34px;
    height: 32px;
    display: flex;
    align-items: center;
    justify-content: center;
    font-weight: 700;
    font-size: 14px;
    color: #ffffff;
    background: linear-gradient(90deg, #777777, #bbbbbb, #777777);
}

.mp span {
    width: 34px;
    height: 32px;
    display: flex;
    align-items: center;
    justify-content: center;
    font-weight: 700;
    font-size: 14px;
    color: #ffffff;
    background: linear-gradient(100deg, #6a3a78, #4a2a58, #6a3a78);
}

.tray-left {
    margin-left: auto;
    display: flex;
    align-items: center;
    margin-right: 26px;
}

.lang { font-size: 12px; margin-right: 12px; }
.help { width: 18px; height: 18px; }
.help-t { font-size: 13px; font-weight: 700; fill: #ffffff; }

.min-btn {
    margin-left: 14px;
    width: 12px;
    text-align: center;
}

.min-btn svg {
    width: 12px;
    height: 10px;
}

.min-btn i { display: block; font-size: 9px; line-height: 13px; }

.tray {
    width: 183px;
    height: 38px;
    flex: none;
    margin-right: 2px;
    display: flex;
    align-items: center;
    border: 1px solid;
    border-color: #808080 #ffffff #ffffff #808080;
    padding-left: 6px;
}

.t-up {
    width: 10px;
    height: 16px;
}

.tr-ic {
    width: 19px;
    height: 21px;
    margin-left: 5px;
}

.clock {
    width: 68px;
    margin-left: 8px;
    text-align: center;
    font-size: 11px;
    line-height: 16px;
}

.tr-desk {
    width: 16px;
    height: 16px;
    margin-left: 4px;
}
```
